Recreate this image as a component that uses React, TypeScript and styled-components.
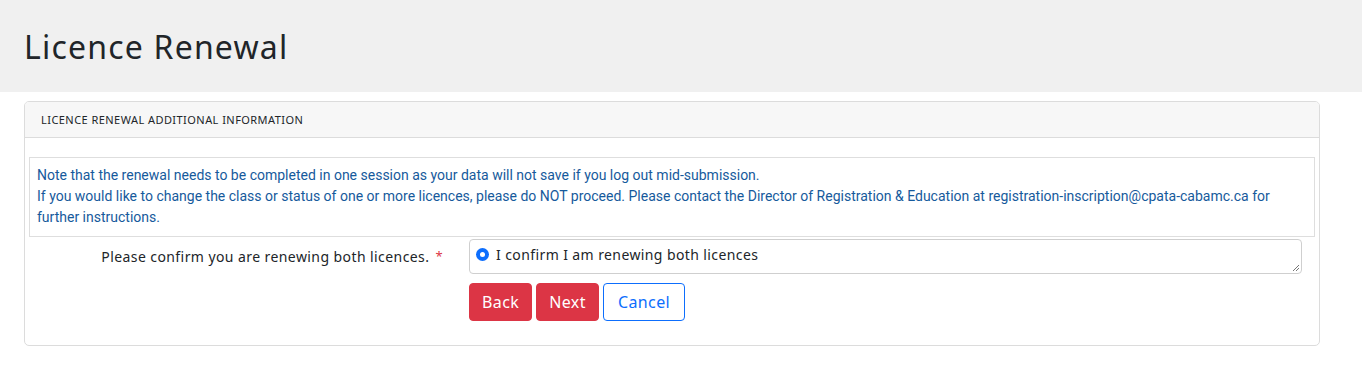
import styled, { createGlobalStyle } from 'styled-components'

const GlobalStyle = createGlobalStyle`
    body {
        margin: 0;
        background: #ffffff;
        font-family: "Noto Sans", "Liberation Sans", sans-serif;
        color: #212529;
    }
`;

const PageHeader = styled.header`
    background: #f0f0f0;
    height: 92px;
    padding: 0 24px;
    display: flex;
    align-items: center;
    box-sizing: border-box;
`;

const Title = styled.h1`
    margin: 0;
    font-family: "Noto Sans", sans-serif;
    font-weight: 400;
    font-size: 32px;
    letter-spacing: 1.2px;
    color: #212529;
`;

const Main = styled.main`
    padding: 9px 24px;
`;

const Card = styled.section`
    width: 1296px;
    box-sizing: border-box;
    border: 1px solid #dcdcdc;
    border-radius: 5px;
    overflow: hidden;
`;

const CardHeader = styled.div`
    height: 36px;
    box-sizing: border-box;
    background: #f7f7f7;
    border-bottom: 1px solid #dcdcdc;
    padding: 0 16px;
    display: flex;
    align-items: center;
    font-size: 11px;
    color: #212529;
    letter-spacing: 0.45px;
`;

const CardBody = styled.div`
    padding: 19px 4px 24px;
`;

const Note = styled.div`
    border: 1px solid #dedede;
    padding: 7px 7px 8px;
    font-family: Roboto, "Liberation Sans", sans-serif;
    font-size: 14px;
    line-height: 21px;
    color: #165a9c;
`;

const FormRow = styled.div`
    display: grid;
    grid-template-columns: 426px 1fr;
    column-gap: 14px;
    margin-top: 2px;
    padding-right: 13px;
`;

const Label = styled.label`
    display: flex;
    justify-content: flex-end;
    align-items: center;
    gap: 6px;
    height: 35px;
    padding: 0 12px 1px 0;
    box-sizing: border-box;
    font-size: 14px;
    letter-spacing: 0.42px;
    color: #212529;
`;

const Required = styled.span`
    color: #dc3545;
    font-size: 13px;
`;

const OptionBox = styled.div`
    height: 35px;
    box-sizing: border-box;
    border: 1px solid #cfcfcf;
    border-radius: 4px;
    display: flex;
    align-items: center;
    padding: 0 6px 5px;
    gap: 7px;
    position: relative;
    font-size: 14px;
    letter-spacing: 0.4px;
`;

const Radio = styled.span`
    width: 13px;
    height: 13px;
    border-radius: 50%;
    background: #0d6efd;
    display: inline-flex;
    align-items: center;
    justify-content: center;
    flex: none;

    &::after {
        content: "";
        width: 5px;
        height: 5px;
        border-radius: 50%;
        background: #fff;
    }
`;

const Grip = styled.svg`
    position: absolute;
    right: 1px;
    bottom: 1px;
`;

const Actions = styled.div`
    grid-column: 2;
    display: flex;
    gap: 4px;
    margin-top: 9px;
`;

const Button = styled.button<{ $variant: 'danger' | 'outline' }>`
    height: 38px;
    padding: 0 ${p => p.$variant === 'danger' ? '12px' : '14px'};
    border-radius: 4px;
    font-family: "Noto Sans", sans-serif;
    font-size: 16px;
    letter-spacing: 0.4px;
    cursor: pointer;
    border: 1px solid ${p => p.$variant === 'danger' ? '#dc3545' : '#0d6efd'};
    background: ${p => p.$variant === 'danger' ? '#dc3545' : '#ffffff'};
    color: ${p => p.$variant === 'danger' ? '#ffffff' : '#0d6efd'};
`;

const App = () => {
    return (
        <>
            <GlobalStyle />
            <PageHeader>
                <Title>Licence Renewal</Title>
            </PageHeader>
            <Main>
                <Card>
                    <CardHeader>LICENCE RENEWAL ADDITIONAL INFORMATION</CardHeader>
                    <CardBody>
                        <Note>
                            Note that the renewal needs to be completed in one session as your data will not save if you log out mid-submission.
                            <br />
                            If you would like to change the class or status of one or more licences, please do NOT proceed. Please contact the Director of Registration &amp; Education at registration-inscription@cpata-cabamc.ca for further instructions.
                        </Note>
                        <FormRow>
                            <Label>
                                Please confirm you are renewing both licences.
                                <Required>*</Required>
                            </Label>
                            <OptionBox>
                                <Radio />
                                I confirm I am renewing both licences
                                <Grip width="9" height="9" viewBox="0 0 9 9">
                                    <path d="M8 2 L2 8 M8 5 L5 8" stroke="#777" strokeWidth="1" />
                                </Grip>
                            </OptionBox>
                            <Actions>
                                <Button $variant="danger">Back</Button>
                                <Button $variant="danger">Next</Button>
                                <Button $variant="outline">Cancel</Button>
                            </Actions>
                        </FormRow>
                    </CardBody>
                </Card>
            </Main>
        </>
    )
}

export default App
